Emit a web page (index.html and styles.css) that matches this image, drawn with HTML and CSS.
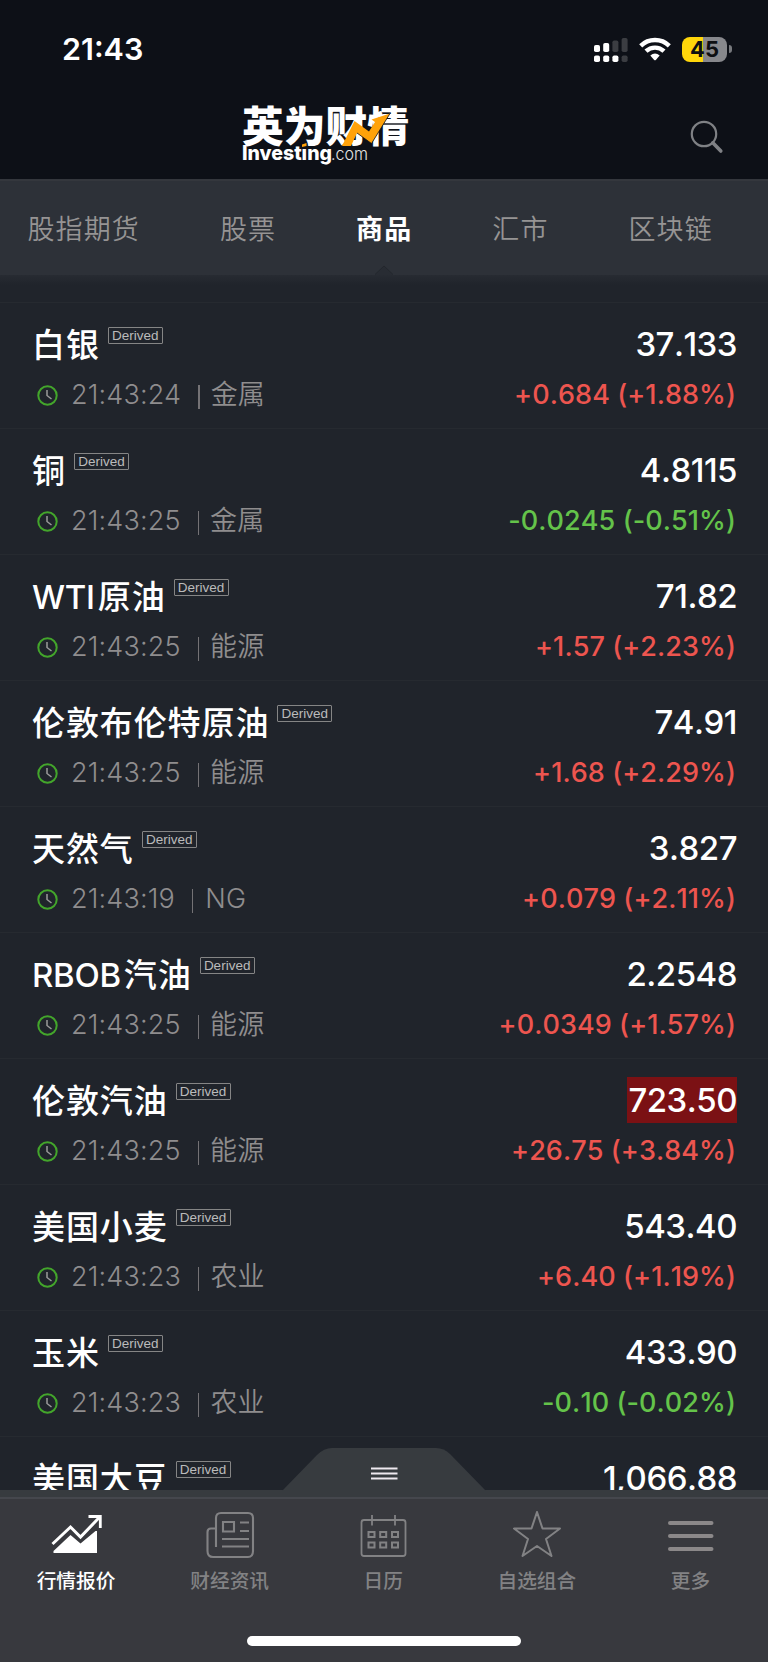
FILE: index.html
```html
<!DOCTYPE html>
<html lang="zh-CN">
<head>
<meta charset="utf-8">
<title>英为财情</title>
<link rel="stylesheet" href="styles.css">
</head>
<body>
<div class="app">
  <header class="top">
    <div class="status">
      <span class="clock">21:43</span>
      <div class="status-icons">
        <svg class="signal" width="34" height="25" viewBox="0 0 34 25">
          <g fill="#fff"><rect x="0" y="8" width="6" height="7" rx="1.8"/><rect x="9.2" y="6" width="6" height="9" rx="1.8"/><rect x="0" y="18.5" width="6" height="6.5" rx="1.8"/><rect x="9.2" y="18.5" width="6" height="6.5" rx="1.8"/><rect x="18.4" y="18.5" width="6" height="6.5" rx="1.8"/></g>
          <g fill="#3b3d42"><rect x="18.4" y="3.5" width="6" height="11.5" rx="1.8"/><rect x="27.6" y="1" width="6" height="14" rx="1.8"/><rect x="27.6" y="18.5" width="6" height="6.5" rx="1.8"/></g>
        </svg>
        <svg class="wifi" width="32" height="24" viewBox="0 0 32 24">
          <g fill="none" stroke="#fff" stroke-width="4.4"><path d="M1.7 8.8A20.5 20.5 0 0 1 30.3 8.8"/><path d="M7 14.2A13 13 0 0 1 25 14.2"/></g>
          <path fill="#fff" d="M11.3 18.6Q16 14.6 20.7 18.6L16.8 22.9Q16 23.6 15.2 22.9Z"/>
        </svg>
        <div class="battery"><span>45</span></div>
        <div class="battery-tip"></div>
      </div>
    </div>
    <div class="brand">
      <svg class="logo" width="170" height="66" viewBox="0 0 170 66">
        <text class="logo-cn" x="-1" y="37.500" textLength="167" lengthAdjust="spacingAndGlyphs">英为财情</text>
        <path d="M99 42L111.500 17L126 27.500L132 18L128.500 15.500L147 9.500L128.500 39.500L114 29L108 42Z" fill="#ffa20a"/>
        <path d="M147 9.500L128.500 39.500L114 29" fill="none" stroke="#0d1017" stroke-width=".8"/>
        <text class="logo-en" x="-1" y="56" textLength="90" lengthAdjust="spacingAndGlyphs">Investıng</text>
        <path d="M59 40.500L63.500 39V42L59 43Z" fill="#ffa20a"/>
        <text class="logo-com" x="88" y="56" textLength="37" lengthAdjust="spacingAndGlyphs">.com</text>
      </svg>
      <svg class="search" width="34" height="34" viewBox="0 0 34 34" fill="none" stroke="#7f8185"><circle cx="14" cy="14" r="12.200" stroke-width="2.200"/><path d="M22.800 22.800L30.800 31" stroke-width="3.600" stroke-linecap="round"/></svg>
    </div>
  </header>
  <nav class="tabs">
    <span>股指期货</span><span>股票</span><span class="on">商品</span><span>汇市</span><span>区块链</span>
    <svg class="notch" width="18" height="10" viewBox="0 0 18 10"><path d="M0 10L9 1L18 10Z" fill="#282c33"/><path d="M0 9.500L9 1L18 9.500" fill="none" stroke="#23272d"/></svg>
  </nav>
  <main class="list" id="list"></main>
  <footer class="bottom">
    <svg class="handle" width="204" height="43" viewBox="0 0 204 43"><path d="M0 43L35 7Q42 0 50 0H154Q162 0 168 6L204 43Z" fill="#373b3f"/><path d="M89 20.500H115.500M89 25.500H115.500M89 30.500H115.500" stroke="#eee9ef" stroke-width="1.800"/></svg>
    <div class="menu">
      <div class="item on"><svg width="52" height="52" viewBox="0 0 52 52"><path d="M2.500 33L20.500 16L30.500 26L49 6.800" fill="none" stroke="#fff" stroke-width="3"/><path d="M38.500 5.500H50.300V17" fill="none" stroke="#fff" stroke-width="2.800"/><path d="M3.500 42V40L20.500 24L30.500 32.500L45.500 20H47V42Z" fill="#fff"/></svg><b>行情报价</b></div>
      <div class="item"><svg width="52" height="52" viewBox="0 0 52 52" fill="none" stroke="#828284" stroke-width="2.100"><path d="M12 36V7Q12 2 17 2H44Q49 2 49 7V40Q49 46 44 46H9Q3.500 46 3.500 40V21Q3.500 17.500 7 17.500H11"/><path d="M19 11H30V20.500H19ZM36 11.500H45M36 20H45M18 28H45M18 35.500H45"/></svg><b>财经资讯</b></div>
      <div class="item"><svg width="52" height="52" viewBox="0 0 52 52" fill="none" stroke="#828284" stroke-width="1.800"><rect x="4.500" y="9" width="44" height="36" rx="2.500"/><path d="M15 4V14.500M38 4V14.500"/><path stroke-width="2" d="M11.500 21h6v5h-6zM23.200 21h6v5h-6zM35 21h6v5h-6zM11.500 31.500h6v5h-6zM23.200 31.500h6v5h-6zM35 31.500h6v5h-6z"/></svg><b>日历</b></div>
      <div class="item"><svg width="52" height="52" viewBox="0 0 52 52" fill="none" stroke="#828284" stroke-width="2" stroke-linejoin="round"><path d="M26 1L31.500 17.500H49L35 28L40.500 45L26 35L11.500 45L17 28L3 17.500H20.500Z"/></svg><b>自选组合</b></div>
      <div class="item"><svg width="52" height="52" viewBox="0 0 52 52" stroke="#8b8889" stroke-width="4" stroke-linecap="round"><path d="M6 12H47.500M6 25H47.500M6 38H47.500"/></svg><b>更多</b></div>
    </div>
    <div class="home"></div>
  </footer>
</div>
<script src="app.js"></script>
</body>
</html>
```
FILE: styles.css
```css
* { box-sizing: border-box; }
body { margin: 0; background: #fff; font-family: Inter, "Noto Sans CJK SC", sans-serif; }
.app { width: 768px; height: 1662px; display: flex; flex-direction: column; background: #20242b; overflow: hidden; color: #fff; }
.top { height: 179px; flex: none; background: #0d1017; display: flex; flex-direction: column; }
.status { height: 98px; display: flex; justify-content: space-between; padding: 0 36px 0 62px; align-items: center; }
.clock { font-size: 30.500px; font-weight: 600; line-height: 36px; }
.status-icons { display: flex; align-items: center; }
.wifi { margin-left: 11px; }
.battery { width: 45px; height: 25px; margin-left: 11px; border-radius: 8px; background: linear-gradient(90deg, #ffd60a 21px, #87888c 21px); color: #0d0f12; font-size: 22px; line-height: 25px; font-weight: 650; text-align: center; }
.battery-tip { width: 3px; height: 8px; margin-left: 2px; border-radius: 0 4px 4px 0; background: #77797d; }
.brand { display: flex; justify-content: space-between; padding: 6px 44px 0 243px; height: 81px; }
.logo { overflow: visible; }
.logo-cn { font: 900 42px "Noto Sans CJK SC", sans-serif; fill: #fff; }
.logo-en { font: 800 20px Inter, sans-serif; fill: #fff; }
.logo-com { font: 300 17px Inter, sans-serif; fill: #e5e5e5; }
.search { margin-top: 16px; }
.tabs { height: 96px; flex: none; position: relative; background: #2d3138; border-top: 2px solid #34373d; display: flex; gap: 80px; padding: 29px 0 0 27.500px; color: #969494; font-size: 27px; line-height: 40px; letter-spacing: 1.100px; font-weight: 350; white-space: nowrap; }
.tabs .on { color: #fff; font-weight: 700; }
.notch { position: absolute; left: 375px; bottom: 0; }
.list { height: 1215px; flex: none; overflow: hidden; padding-top: 27px; background: linear-gradient(#272b32, #20242b 10px); }
.row { height: 126px; border-top: 1px solid #262a30; padding: 21px 32px 0 32px; }
.line { display: flex; justify-content: space-between; align-items: flex-start; }
.title { display: flex; height: 51px; }
.name { font-size: 33px; line-height: 42px; letter-spacing: .9px; font-weight: 500; }
.latin { letter-spacing: -.3px; margin-right: 3px; }
.badge { width: 55px; height: 17px; margin: 3px 0 0 8px; border: 1px solid #858585; border-radius: 1px; font: 13.500px/15px "Liberation Sans", sans-serif; color: #bbb; text-align: center; }
.price { font-size: 33px; line-height: 45px; margin: -3px -1px 0 0; padding: 1px 0 0 1px; font-weight: 500; font-kerning: none; letter-spacing: -.5px; }
.price.hit { background: #7b1114; }
.meta { display: flex; align-items: center; height: 40px; color: #8f8d8e; font-size: 27px; font-weight: 300; line-height: 40px; letter-spacing: .15px; white-space: pre; }
.kind { font-weight: 350; }
.kind.code { font-weight: 300; margin-left: 1px; }
.clock-icon { margin: 0 13px 0 5px; }
.bar { width: 1.500px; height: 24px; background: #747275; margin: 4px 11px 0 17px; }
.change { font-size: 27px; line-height: 40px; font-weight: 450; font-kerning: none; letter-spacing: .08px; }
.up { color: #ed554f; }
.down { color: #64c34a; }
.bottom { position: relative; height: 172px; flex: none; background: #373b3f; padding-top: 7px; }
.handle { position: absolute; left: 282px; top: -42px; }
.menu { border-top: 2px solid #45474d; display: flex; background: #38393e; height: 165px; padding-top: 12px; }
.item { flex: 1; display: flex; flex-direction: column; align-items: center; color: #828284; font-size: 19.700px; }
.item svg, .item b { margin-left: -1.500px; }
.item b { font-weight: 500; line-height: 30px; margin-top: 3px; }
.item.on { color: #fff; }
.home { position: absolute; left: 247px; top: 146px; width: 274px; height: 10px; border-radius: 5px; background: #fff; }
```
FILE: app.js
```js
const quotes = [
  ["白银", "21:43:24", "金属", "37.133", "+0.684 (+1.88%)"],
  ["铜", "21:43:25", "金属", "4.8115", "-0.0245 (-0.51%)"],
  ["WTI原油", "21:43:25", "能源", "71.82", "+1.57 (+2.23%)"],
  ["伦敦布伦特原油", "21:43:25", "能源", "74.91", "+1.68 (+2.29%)"],
  ["天然气", "21:43:19", "NG", "3.827", "+0.079 (+2.11%)"],
  ["RBOB汽油", "21:43:25", "能源", "2.2548", "+0.0349 (+1.57%)"],
  ["伦敦汽油", "21:43:25", "能源", "723.50", "+26.75 (+3.84%)", "hit"],
  ["美国小麦", "21:43:23", "农业", "543.40", "+6.40 (+1.19%)"],
  ["玉米", "21:43:23", "农业", "433.90", "-0.10 (-0.02%)"],
  ["美国大豆", "", "", "1,066.88", ""]
];
const icon = '<svg class="clock-icon" width="21" height="21" viewBox="0 0 21 21" fill="none"><circle cx="10.500" cy="10.500" r="9.200" stroke="#43a52b" stroke-width="2"/><path d="M10 5V10.500L14.500 14" stroke="#9a9a9a" stroke-width="1.500"/></svg>';
const label = name => name.replace(/^[A-Z]+/, m => `<span class="latin">${m}</span>`);
document.getElementById("list").innerHTML = quotes.map(([name, time, kind, price, change, hit]) => `
  <div class="row">
    <div class="line"><div class="title"><span class="name">${label(name)}</span><span class="badge">Derived</span></div><span class="price ${hit || ""}">${price}</span></div>
    ${time && `<div class="line"><div class="meta">${icon}<span>${time}</span><i class="bar"></i><span class="kind ${kind === "NG" ? "code" : ""}">${kind}</span></div><span class="change ${change[0] === "+" ? "up" : "down"}">${change}</span></div>`}
  </div>`).join("");
```
